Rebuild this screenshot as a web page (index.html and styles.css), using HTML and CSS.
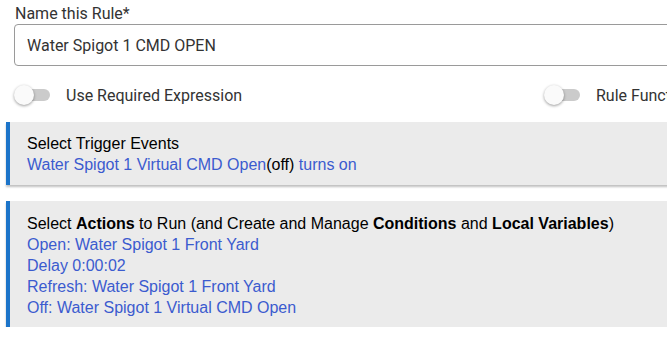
FILE: index.html
```html
<!DOCTYPE html>
<html lang="en">
<head>
    <meta charset="UTF-8">
    <title>Rule Machine</title>
    <link rel="stylesheet" href="styles.css">
</head>
<body>
    <div id="page">
        <div class="field">
            <label for="ruleName">Name this Rule*</label>
            <input type="text" id="ruleName" value="Water Spigot 1 CMD OPEN">
        </div>

        <div class="options">
            <div class="option">
                <span class="toggle"><span class="knob"></span></span>
                <span>Use Required Expression</span>
            </div>
            <div class="option">
                <span class="toggle"><span class="knob"></span></span>
                <span>Rule Functions</span>
            </div>
        </div>

        <div class="card trigger">
            <div>Select Trigger Events</div>
            <div class="link">Water Spigot 1 Virtual CMD Open<span class="plain">(off)</span> turns on</div>
        </div>

        <div class="card actions">
            <div>Select <b>Actions</b> to Run (and Create and Manage <b>Conditions</b> and <b>Local Variables</b>)</div>
            <div class="link">Open: Water Spigot 1 Front Yard</div>
            <div class="link">Delay 0:00:02</div>
            <div class="link">Refresh: Water Spigot 1 Front Yard</div>
            <div class="link">Off: Water Spigot 1 Virtual CMD Open</div>
        </div>
    </div>
</body>
</html>
```

FILE: styles.css
```css
body {
    margin: 0;
    background-color: #fff;
    font-family: 'Roboto', sans-serif;
    color: #333;
    overflow: hidden;
}

#page {
    width: 1100px;
    padding-top: 4px;
}

.field {
    margin-left: 14px;
}

.field label {
    display: block;
    font-size: 16px;
    line-height: 20px;
    padding-left: 1px;
}

.field input {
    display: block;
    box-sizing: border-box;
    width: 1000px;
    height: 42px;
    margin: 0;
    padding: 0 12px;
    border: 1px solid #9a9a9a;
    border-radius: 4px;
    font-family: 'Roboto', sans-serif;
    font-size: 16px;
    color: #333;
    outline: none;
}

.options {
    display: grid;
    grid-template-columns: 530px 530px;
    margin: 18px 0 0 14px;
    height: 22px;
}

.option {
    display: flex;
    align-items: center;
    gap: 16px;
    font-size: 16px;
}

.toggle {
    position: relative;
    width: 36px;
    height: 20px;
}

.toggle::before {
    content: '';
    position: absolute;
    left: 3px;
    top: 4px;
    width: 33px;
    height: 12px;
    border-radius: 6px;
    background-color: #cbcbcb;
}

.knob {
    position: absolute;
    left: 0;
    top: 0;
    width: 20px;
    height: 20px;
    border-radius: 50%;
    background-color: #fafafa;
    box-shadow: 0 1px 3px rgba(0, 0, 0, 0.4);
}

.card {
    margin-left: 6px;
    width: 1000px;
    background-color: #ebebeb;
    border-left: 4px solid #1c74c9;
    box-shadow: 0 2px 2px rgba(0, 0, 0, 0.25);
    font-family: 'Liberation Sans', sans-serif;
    font-size: 16px;
    line-height: 21px;
    color: #000;
    padding-left: 17px;
    box-sizing: border-box;
}

.trigger {
    margin-top: 16px;
    padding-top: 11px;
    padding-bottom: 10px;
}

.actions {
    margin-top: 16px;
    padding-top: 12px;
    padding-bottom: 9px;
}

.link {
    color: #3b5bcf;
}

.plain {
    color: #000;
}
```
